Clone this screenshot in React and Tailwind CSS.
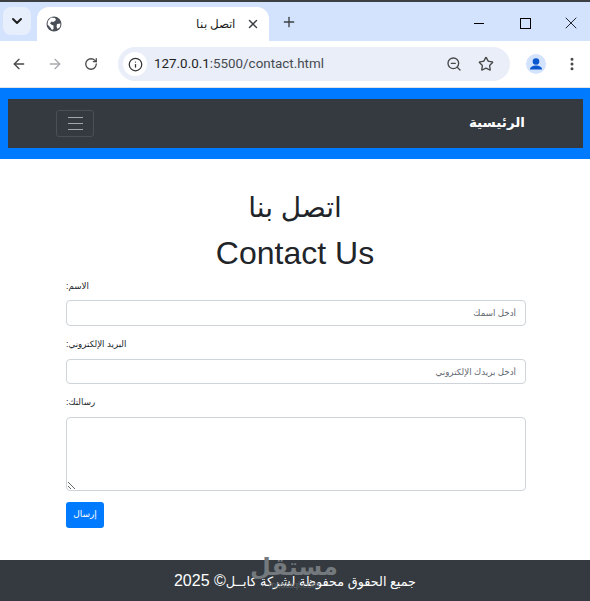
import React from 'react'
import { ArrowLeft, ArrowRight, RotateCw, Info, ZoomOut, Star, X, Plus, ChevronDown, EllipsisVertical } from 'lucide-react'

const Globe = () => (
  <svg width="16" height="16" viewBox="0 0 16 16">
    <circle cx="8" cy="8" r="7.5" fill="#4a4f57" />
    <path d="M5 1.5 L9 2 L10 4 L7.5 6 L5.5 5.5 L4 7.5 L6 9 L7.5 9.5 L7.5 13 L6 14 L4 11 L1.5 8.5 L2 5 Z" fill="#fff" />
    <path d="M11 8 L14.5 7.5 L14 11 L11.5 13 L10.5 10.5 Z" fill="#fff" />
  </svg>
)

const Account = () => (
  <svg width="20" height="20" viewBox="0 0 20 20">
    <circle cx="10" cy="10" r="10" fill="#d3e3fd" />
    <circle cx="10" cy="7.5" r="3.3" fill="#0b57d0" />
    <path d="M4 15.5 C4 12.5 7.5 11.5 10 11.5 C12.5 11.5 16 12.5 16 15.5 Z" fill="#0b57d0" />
  </svg>
)

const BrowserBar = () => (
  <div className="font-['Roboto',sans-serif]">
    <div className="h-[2px] bg-[#3c4043]" />
    <div className="h-[39px] bg-[#d3e3fd] flex items-start">
      <div className="w-[28px] h-[28px] mt-[5px] ml-[3px] rounded-lg bg-[#e8effc] flex items-center justify-center">
        <ChevronDown size={16} strokeWidth={3} className="text-[#1f1f1f]" />
      </div>
      <div className="w-[232px] h-[34px] mt-[5px] ml-[6px] bg-white rounded-t-xl flex items-center pl-[9px] pr-[9px]">
        <Globe />
        <span dir="rtl" className="ml-auto mr-[11px] text-[12px] text-[#1f1f1f] font-['Liberation_Sans',sans-serif]">اتصل بنا</span>
        <X size={14} strokeWidth={2.5} className="text-[#3c4043]" />
      </div>
      <Plus size={16} strokeWidth={2} className="text-[#3c4043] mt-[12px] ml-[12px]" />
      <div className="ml-auto flex items-center h-[42px] text-black">
        <div className="w-[10px] h-[1px] bg-black mr-[36px]" />
        <div className="w-[11px] h-[11px] border border-black mr-[30px]" />
        <X size={20} strokeWidth={1} className="mr-[9px]" />
      </div>
    </div>
    <div className="h-[47px] bg-white border-b border-[#dfe3e8] flex items-center">
      <ArrowLeft size={16} strokeWidth={2} className="ml-[11px] text-[#474747]" />
      <ArrowRight size={16} strokeWidth={2} className="ml-[20px] text-[#a9abae]" />
      <RotateCw size={14} strokeWidth={2.2} className="ml-[21px] text-[#474747]" />
      <div className="ml-[20px] w-[392px] h-[34px] rounded-full bg-[#e9eef8] flex items-center pl-[5px] pr-[16px]">
        <div className="w-[24px] h-[24px] rounded-full bg-white flex items-center justify-center">
          <Info size={15} strokeWidth={2} className="text-[#333]" />
        </div>
        <span className="ml-[7px] text-[13.4px] text-[#1f1f1f]">127.0.0.1<span className="text-[#474a50]">:5500/contact.html</span></span>
        <ZoomOut size={16} strokeWidth={2} className="ml-auto text-[#474747]" />
        <Star size={16} strokeWidth={2} className="ml-[16px] text-[#474747]" />
      </div>
      <div className="ml-[16px]"><Account /></div>
      <EllipsisVertical size={16} strokeWidth={2.5} className="ml-[18px] text-[#474747]" />
    </div>
  </div>
)

const inputClass = 'block w-full border border-[#ced4da] rounded-[4px] bg-white pl-3 pr-[9px] text-[8.7px] text-[#495057] placeholder:text-[#5f6770] outline-none'

const App = () => {
  return (
    <div className="w-[590px] h-[601px] overflow-hidden bg-white font-['Liberation_Sans','DejaVu_Sans',sans-serif] text-[#212529] flex flex-col">
      <BrowserBar />

      <nav className="bg-[#007bff] px-2 py-[11px]">
        <div className="h-[49px] w-[575px] bg-[#343a40] flex items-center pl-[48px] pr-[58px]">
          <button className="w-[38px] h-[27px] border border-[#4b5056] rounded-[3px] flex flex-col items-center justify-center gap-[5px]">
            <span className="block w-[15px] h-[1px] bg-[#a4a7aa]" />
            <span className="block w-[15px] h-[1px] bg-[#a4a7aa]" />
            <span className="block w-[15px] h-[1px] bg-[#a4a7aa]" />
          </button>
          <a dir="rtl" className="ml-auto text-[13.5px] font-bold text-white">الرئيسية</a>
        </div>
      </nav>

      <main className="flex-1 px-[66px]">
        <h1 dir="rtl" className="text-center text-[28px] leading-[34px] mt-[32px]">اتصل بنا</h1>
        <h2 className="text-center text-[32px] leading-[38px] mt-[9px] text-[#212529]">Contact Us</h2>

        <form className="w-[460px]">
          <label dir="rtl" className="block w-fit text-[8.7px] leading-[14px] mt-[7px] mb-[7px]">الاسم:</label>
          <input dir="rtl" className={`${inputClass} h-[26px]`} placeholder="أدخل اسمك" />

          <label dir="rtl" className="block w-fit text-[8.7px] leading-[14px] mt-[11px] mb-[8px]">البريد الإلكتروني:</label>
          <input dir="rtl" className={`${inputClass} h-[25px]`} placeholder="أدخل بريدك الإلكتروني" />

          <label dir="rtl" className="block w-fit text-[8.7px] leading-[14px] mt-[11px] mb-[8px]">رسالتك:</label>
          <textarea dir="rtl" className={`${inputClass} h-[74px] py-1`} />

          <button type="button" dir="rtl" className="block mt-[11px] w-[38px] h-[26px] rounded-[3px] bg-[#007bff] text-white text-[9px]">إرسال</button>
        </form>
      </main>

      <footer className="relative h-[41px] bg-[#343a40] flex items-center justify-center text-white text-[16px]">
        <span dir="rtl"><span className="text-[12.8px]">جميع الحقوق محفوظة لشركة كابــل</span>© 2025</span>
        <div className="absolute left-[258px] top-[-7px] w-[72px] flex flex-col items-center text-[#74797e] pointer-events-none">
          <span dir="rtl" className="text-[24px] leading-[28px] font-bold">مستقل</span>
          <span className="text-[9px] leading-[9px] text-[#5b6066]">mostaql.com</span>
        </div>
      </footer>
    </div>
  )
}

export default App
